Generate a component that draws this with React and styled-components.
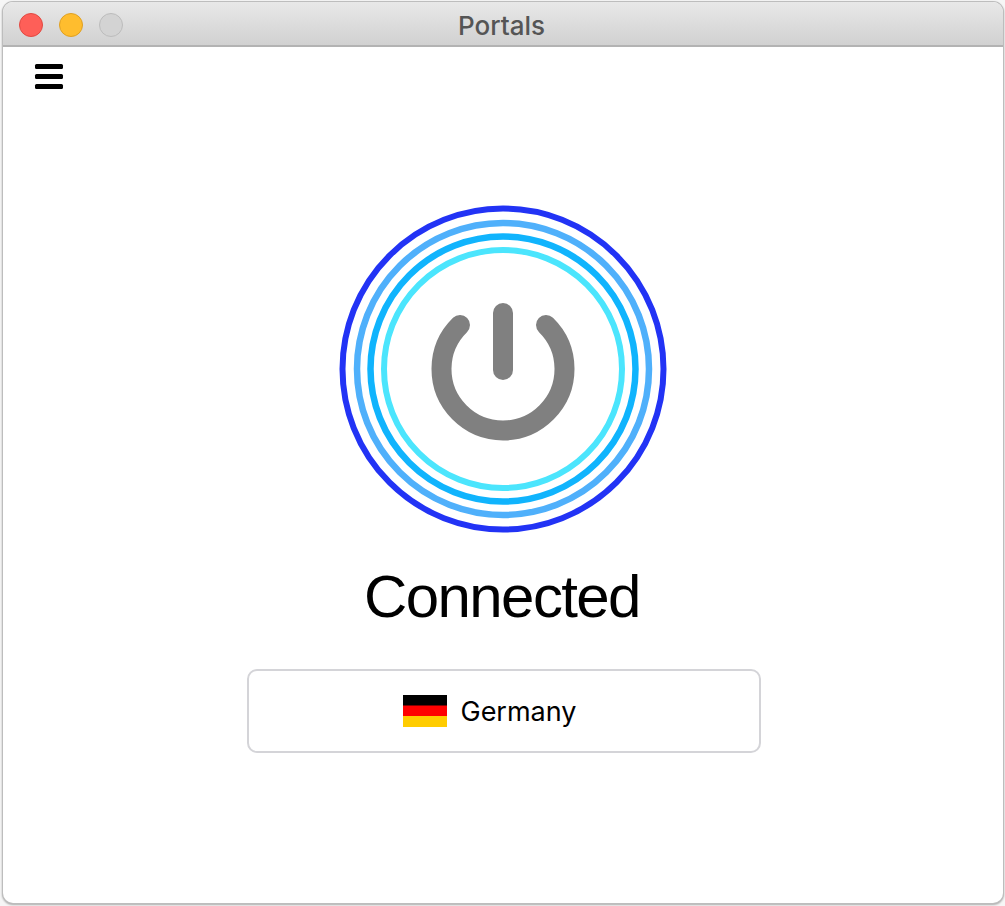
import React from "react";
import styled, { createGlobalStyle } from "styled-components";

const Global = createGlobalStyle`
  html, body { margin: 0; padding: 0; background: #f6f6f6; }
  body { width: 1005px; height: 906px; overflow: hidden; font-family: Inter, "Liberation Sans", sans-serif; }
  * { box-sizing: border-box; }
`;

const Backdrop = styled.div`
  width: 1005px;
  height: 906px;
  padding: 2px 2px 3px 3px;
  background: #f6f6f6;
`;

const Window = styled.div`
  width: 1000px;
  height: 901px;
  display: flex;
  flex-direction: column;
  background: #fff;
  border-radius: 10px;
  overflow: hidden;
  box-shadow: 0 0 0 1px #bdbdbd, 0 1px 2px 1px rgba(0, 0, 0, 0.3);
`;

const TitleBar = styled.header`
  height: 45px;
  flex: none;
  display: flex;
  align-items: center;
  gap: 16px;
  padding: 3px 0 0 16px;
  position: relative;
  background: linear-gradient(180deg, #e8e8e8 0%, #d1d1d1 100%);
  border-bottom: 2px solid #b3b3b3;
`;

const Light = styled.span`
  width: 24px;
  height: 24px;
  border-radius: 50%;
  background: ${(p) => p.$fill};
  border: 1px solid ${(p) => p.$edge};
`;

const Title = styled.div`
  position: absolute;
  inset: 0;
  display: flex;
  align-items: center;
  justify-content: center;
  padding: 3px 3px 0 0;
  font-size: 26px;
  font-weight: 500;
  color: #555;
  pointer-events: none;
`;

const Body = styled.main`
  flex: 1;
  display: flex;
  flex-direction: column;
  align-items: center;
`;

const Toolbar = styled.div`
  align-self: stretch;
  padding: 17px 0 0 32px;
  height: 157px;
  flex: none;
`;

const MenuButton = styled.div`
  width: 28px;
  display: flex;
  flex-direction: column;
  gap: 5px;
`;

const MenuBar = styled.span`
  display: block;
  height: 5px;
  background: #000;
  border-radius: 1.5px;
`;

const PowerIcon = styled.svg`
  width: 330px;
  height: 330px;
  flex: none;
  display: block;
  filter: blur(0.45px);
`;

const Status = styled.h1`
  margin: 28px 0 0;
  padding-right: 2px;
  font-family: "Liberation Sans", Inter, sans-serif;
  font-size: 60px;
  line-height: 69px;
  font-weight: 400;
  color: #000;
  letter-spacing: -1.6px;
`;

const CountryButton = styled.div`
  width: 514px;
  height: 84px;
  margin-top: 38px;
  margin-left: 2px;
  padding-right: 28px;
  display: flex;
  align-items: center;
  justify-content: center;
  gap: 13px;
  border: 2px solid #d4d4d8;
  border-radius: 10px;
  font-size: 27px;
  color: #000;
`;

const Flag = styled.svg`
  width: 44px;
  height: 32px;
  display: block;
`;

export default function App() {
  return (
    <>
      <Global />
      <Backdrop>
        <Window>
          <TitleBar>
            <Light $fill="#fe5f58" $edge="#e14942" />
            <Light $fill="#ffbd2e" $edge="#dfa023" />
            <Light $fill="#d3d3d3" $edge="#bcbcbc" />
            <Title>Portals</Title>
          </TitleBar>
          <Body>
            <Toolbar>
              <MenuButton>
                <MenuBar />
                <MenuBar />
                <MenuBar />
              </MenuButton>
            </Toolbar>
            <PowerIcon viewBox="0 0 330 330" fill="none">
              <circle cx="165" cy="165" r="160.5" stroke="#2233f5" strokeWidth="6" />
              <circle cx="165" cy="165" r="146" stroke="#4fb0fb" strokeWidth="6.5" />
              <circle cx="165" cy="165" r="132.5" stroke="#10b4fd" strokeWidth="6.5" />
              <circle cx="165" cy="165" r="119" stroke="#4be5fd" strokeWidth="6" />
              <path
                d="M122 121 A61.5 61.5 0 1 0 208 121"
                stroke="#808080"
                strokeWidth="20"
                strokeLinecap="round"
              />
              <path d="M165 109 V166" stroke="#808080" strokeWidth="20" strokeLinecap="round" />
            </PowerIcon>
            <Status>Connected</Status>
            <CountryButton>
              <Flag viewBox="0 0 44 32">
                <rect width="44" height="11" y="0" fill="#000" />
                <rect width="44" height="11" y="10.5" fill="#f00" />
                <rect width="44" height="11" y="21" fill="#ffcc00" />
              </Flag>
              Germany
            </CountryButton>
          </Body>
        </Window>
      </Backdrop>
    </>
  );
}
